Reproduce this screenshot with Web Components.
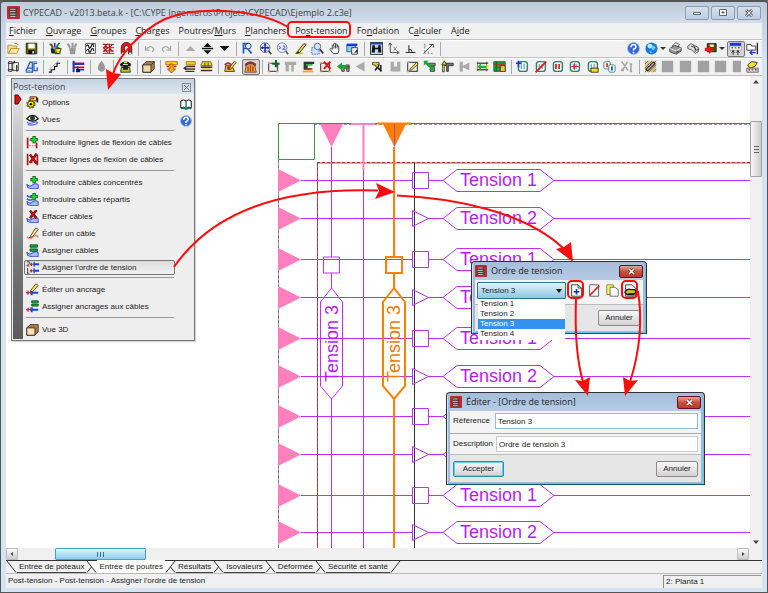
<!DOCTYPE html>
<html lang="fr">
<head>
<meta charset="utf-8">
<title>CYPECAD - v2013.beta.k</title>
<style>
html,body{margin:0;height:100%}
body{font:8px/12px "Liberation Sans",Arial,sans-serif;color:#222;background:#666;--ui:"Open Sans","Noto Sans",sans-serif}
</style>
</head>
<body>
<cad-app></cad-app>
<script>
const ICONS={
logo:'<rect width="16" height="16" rx="1" fill="#c22a2f"/><path d="M4 3h9l-2 2H3zM3 6h9l-1 2H2.500zM4 9h9l-2 2H3zM3 12h10l-2 2H4z" fill="#eee" stroke="#222" stroke-width=".8"/><path d="M11 2v12" stroke="#333"/>',
open:'<path d="M1 4h5l1 1h5v3H5l-3 6H1z" fill="#f7dc8b" stroke="#b98a2d"/><path d="M5 8h10l-3 6H2z" fill="#ffe9a8" stroke="#b98a2d"/><path d="M9 2q3-2 5 2" fill="none" stroke="#666"/>',
save:'<path d="M1.500 1.500h13v13h-13z" fill="#6b6b00" stroke="#111"/><path d="M4 2h8v6H4z" fill="#fff"/><path d="M4 10h8v5H4z" fill="#111"/><path d="M9 11h2v3H9z" fill="#ddd"/>',
pots:'<path d="M1 2l3 4v3l4 5h5V8L9 6l4-5" fill="none" stroke="#008a2a" stroke-width="2"/><path d="M2 8h5v6H3z" fill="#222"/><path d="M8 8h7l-2 6H9z" fill="#ffd81e" stroke="#222"/><path d="M7 1v6" stroke="#1638d8" stroke-width="2"/><path d="M3 2l2 5" stroke="#e11" stroke-width="1.500"/>',
potsg:'<path d="M2 2l3 5M8 1v6M13 2l-3 5" stroke="#999" stroke-width="2.500"/><path d="M4 7h8l-1 8H5z" fill="#999"/>',
graph:'<path d="M2 2h12v12H2z" fill="#fff" stroke="#333"/><path d="M3 5q2-3 3 1t3-1 3 1M3 11q2-4 3 0t3-1 3 1" fill="none" stroke="#111" stroke-width="1.500"/>',
mesh:'<path d="M1 3h14M1 7h14M1 11h14M1 14h14" stroke="#333"/><path d="M2 2l5 5-5 5M7 2l-5 5 5 6M9 2v12M13 3l-4 4 4 5" fill="none" stroke="#c11" stroke-width="1.500"/>',
magnet:'<path d="M3.500 15V7a4.500 4.500 0 0 1 9 0v8" fill="none" stroke="#222" stroke-width="5"/><path d="M3.500 12V7a4.500 4.500 0 0 1 9 0v5" fill="none" stroke="#e01818" stroke-width="3.500"/><path d="M2 13h3v2H2zM11 13h3v2h-3z" fill="#fff"/>',
undo:'<path d="M3 5v5h5M4 9q5-6 9-1 1 2-2 4" fill="none" stroke="#aaa" stroke-width="1.500"/>',
redo:'<path d="M13 5v5H8M12 9Q7 3 3 8q-1 2 2 4" fill="none" stroke="#aaa" stroke-width="1.500"/>',
up:'<path d="M2 11l6-6 6 6z" fill="#aaa"/>',
updown:'<path d="M3 6l5-5 5 5zM3 10l5 5 5-5zM1 7.200h14v1.600H1z" fill="#111"/>',
down:'<path d="M2 5h12l-6 6z" fill="#111"/>',
zr:'<path d="M3 14V2h6q4 3 0 6H4M8 8l5 6" fill="none" stroke="#1f4fd0" stroke-width="2"/><path d="M2 2l9 9" stroke="#38b"/><circle cx="9" cy="5" r="3.500" fill="#d4f0ff" stroke="#123"/>',
zall:'<circle cx="7.500" cy="7" r="6" fill="#eef" stroke="#555"/><path d="M12 11l3 4" stroke="#333" stroke-width="2"/><path d="M7.500 2v10M2.500 7h10" stroke="#1638d8" stroke-width="2"/><path d="M5.500 4h4l-2-3zM5.500 10h4l-2 3zM5 5v4L2 7zM10 5v4l3-2z" fill="#1638d8"/>',
z2:'<circle cx="7.500" cy="7" r="6" fill="#eef" stroke="#777"/><path d="M12 11l3 4" stroke="#555" stroke-width="2"/><path d="M3 5l3 2-3 2M8 5h3v2L8 9h4" fill="none" stroke="#2458e0"/>',
pencil:'<path d="M1 14h10" stroke="#cb1" stroke-width="2"/><path d="M4 12L12 2l3 1-8 10-4 1z" fill="#e6d83a" stroke="#222"/><path d="M3 14l2-3 2 2z" fill="#222"/>',
zwin:'<path d="M1 7h9v8H1z" fill="#cfe6ff" stroke="#35c" stroke-dasharray="2 1"/><circle cx="8" cy="5.500" r="4" fill="#cfe8f8" stroke="#456"/><path d="M11 9l4 5" stroke="#333" stroke-width="2"/>',
hand:'<path d="M5 14L1 9q1-2 3 0V4q1-1 2 0V2q1-1 2 0v1q1-1 2 0v2q2-1 2 1v5l-1 3z" fill="#fff" stroke="#222"/><path d="M6 4v4M8 3v5M10 4v4" stroke="#222"/>',
print3:'<path d="M1 3h11v9H1z" fill="#7fd4e8" stroke="#124c9c"/><path d="M1 2h13v3H1z" fill="#1638d8"/><path d="M7 7h7v8H7z" fill="#fff" stroke="#222"/><path d="M10 13l4-4v4z" fill="#222"/>',
bino:'<path d="M.5.500h15v15H.5z" fill="#bdd3ee" stroke="#111"/><path d="M3 4h3v3h4V4h3l1 9h-4V9H6v4H2z" fill="#111"/><path d="M1 2h14" stroke="#1638d8" stroke-width="2"/>',
axes:'<path d="M4 2v11h10M2 4l2-3 2 3M12 11l3 2-3 2" fill="none" stroke="#333"/><path d="M8 6l4 5M12 6l-4 5" stroke="#777"/>',
perp:'<path d="M2 13h12M6 13V4M6 9q4 0 4 4" fill="none" stroke="#333" stroke-width="1.300"/>',
diag:'<path d="M2 14L13 3M9 3h5v4" fill="none" stroke="#222"/><path d="M3 2v12h11M3 5h3M8 14v-4" fill="none" stroke="#777" stroke-dasharray="2 2"/>',
help:'<circle cx="8" cy="8" r="7.300" fill="#3469d8" stroke="#8fb3ec"/><path d="M5 6.500q0-3.500 3-3.500t3 3q0 1.500-3 3v1.500M8 12v2" fill="none" stroke="#fff" stroke-width="1.900"/>',
globe:'<circle cx="8" cy="8" r="7.500" fill="#1979dc"/><circle cx="6" cy="5" r="3" fill="#bfe6ff"/><path d="M9 4l4 2-2 4-3-1zM5 11l4 1-2 2z" fill="#6fd0ef"/>',
printer:'<path d="M4 5l4-4 5 2-3 4z" fill="#fff" stroke="#444"/><path d="M1 8l6-4 8 3v4l-6 4-8-3z" fill="#999" stroke="#333"/><path d="M1 8l8 3 6-4" fill="none" stroke="#eee"/><path d="M9 11v3l4-3z" fill="#555"/>',
plot:'<path d="M1 5l4-3 4 2 5 3v5l-4 2-4-4-5-2z" fill="#ddd" stroke="#444"/><path d="M5 5l5 2v5M8 4l3 6 4-1" fill="none" stroke="#333"/>',
export:'<path d="M4 2h11v10H4z" fill="#555500" stroke="#111"/><path d="M7 3h5v3H7z" fill="#eee"/><path d="M1 7h5V4l6 5-6 6v-4H1z" fill="#e31b1b"/>',
panel:'<path d="M1 1h14v4H1z" fill="#1638d8"/><path d="M1 5h14v5H1z" fill="#fff" stroke="#999"/><path d="M3 7h2" stroke="#e22" stroke-width="2"/><path d="M7 7h2" stroke="#2a2" stroke-width="2"/><path d="M11 7h2" stroke="#e22" stroke-width="2"/><path d="M5 10v6M3 13l2-2 2 2M11 10v6M9 13l2-2 2 2" stroke="#111" fill="none"/>',
leave:'<path d="M1 3h5l1 2h5v5H1z" fill="#fff" stroke="#222"/><path d="M14 1v14" stroke="#222" stroke-width="1.500"/><path d="M12 13H5M8 10l-3 3 3 3" fill="none" stroke="#1638d8" stroke-width="1.500"/>',
column:'<path d="M2 2h4v12H2zM7 3h7v10H7z" fill="#eee" stroke="#333"/><path d="M1 4h7M1 12h7M9 1v3M12 6v8" stroke="#222" stroke-width="1.500"/>',
ag:'<path d="M1 14L6 3h3v11M3 10h6M15 4h-4v9h4V9M1 15h9" fill="none" stroke="#2a5fc8" stroke-width="1.600"/><path d="M5 2h10M3 13h4" stroke="#5ac3dc" stroke-width="1.500"/>',
stairs:'<path d="M1 15h3v-3h4V8h3V4h4" fill="none" stroke="#111" stroke-width="1.400"/><path d="M1 12l12-11" stroke="#999"/>',
beamred:'<path d="M1 3h14v3H1zM1 8h14v2H1z" fill="#c11"/><path d="M2 1v14" stroke="#1638d8" stroke-width="2.500"/><path d="M7 8v4h8" fill="none" stroke="#1638d8" stroke-width="2"/><path d="M5 11h5v4H5z" fill="#123"/><path d="M4 5h11" stroke="#1638d8" stroke-width="2"/>',
drop:'<path d="M8 1q6 7 4 11-4 5-8 0-2-4 4-11z" fill="#999"/>',
phone:'<path d="M1 5q7-7 14 0l-1 3h-3V5H5v3H2z" fill="#222"/><path d="M3 9h10l1 6H2z" fill="#b7c91c" stroke="#222"/><path d="M5 6h6v6H5z" fill="#222"/><path d="M6 3h4" stroke="#ee2" stroke-width="2"/>',
cube:'<path d="M1 6l4-4h10v9l-4 4H1z" fill="#b77d3c" stroke="#222"/><path d="M1 6h10v9H1z" fill="#f2d9ad" stroke="#222"/><path d="M11 6l4-4" stroke="#222"/>',
beamy1:'<path d="M1 2h14v4H1z" fill="#ffd31a" stroke="#a60"/><path d="M6 5h4v6h3l-5 5-5-5h3z" fill="#f5b400" stroke="#a30"/><path d="M2 8h3M11 8h3" stroke="#b20" stroke-width="2"/>',
beamy2:'<path d="M4 2h11v4H4z" fill="#ffc91a" stroke="#a60"/><path d="M4 8h11M3 11h12M3 14h11" stroke="#333" stroke-width="1.700"/><path d="M5 9.500h9" stroke="#fc2"/><path d="M0 10l4-3v6z" fill="#333"/>',
beamy3:'<path d="M3 2h10l2 5H1z" fill="#ffd31a" stroke="#653"/><path d="M1 9h14M1 13h14" stroke="#333" stroke-width="1.700"/><path d="M2 11h12" stroke="#fc2" stroke-width="2"/><path d="M6 3v5M10 3v5" stroke="#333"/>',
phonep:'<path d="M2 7h8l3 7H1z" fill="#f7c71c" stroke="#222"/><path d="M7 11l7-9" stroke="#432" stroke-width="3.500"/><path d="M7 11l7-9" stroke="#fd4" stroke-width="2"/><path d="M1 6q4-4 8 0" stroke="#a33" stroke-width="2.500" fill="none"/><path d="M4 8h4v4H4z" fill="#a22"/>',
phoner:'<path d="M1 5q7-7 14 0l-1 3h-3V5H5v3H2z" fill="#833"/><path d="M3 6h10l2 9H1z" fill="#f7b81c" stroke="#733"/><path d="M5 8v6M8 7v7M11 8v6" stroke="#a22" stroke-width="1.500"/>',
addp:'<path d="M2 4h11v10H2z" fill="#eee" stroke="#555" stroke-width="1.500"/><path d="M1 4h3M1 14h3M11 14h3" stroke="#d96" stroke-width="2"/><path d="M11 0v9M6.500 4.500h9" stroke="#0b6b22" stroke-width="2.500"/>',
gn:'<path d="M1 2h14v4h-3v8H9V6H6v8H2V6H1z" fill="#aaa"/>',
bm1:'<path d="M2 2h13v3H7v5h5v2H2z" fill="#333"/><path d="M1 14h13" stroke="#f7aa1c" stroke-width="2.500"/><path d="M5 6h8" stroke="#2b4" stroke-width="2"/><path d="M4 11h9" stroke="#c22"/>',
delp:'<path d="M2 4h11v10H2z" fill="#eee" stroke="#555" stroke-width="1.500"/><path d="M1 4h2M1 14h3M11 14h3" stroke="#d83" stroke-width="2"/><path d="M6 2l8 9M14 2l-8 9" stroke="#e11" stroke-width="2.500"/>',
larr:'<path d="M5 8h10v2H9v4H6zM11 6h4v8h-3z" fill="#888" stroke="#444"/><path d="M0 8l6-5v3h6v4H6v3z" fill="#19a52f"/>',
gl:'<path d="M2 8l11-6v12z" fill="#aaa"/>',
bm2:'<path d="M2 3h8v3H2z" fill="#f0cc24" stroke="#333"/><path d="M5 6l8 8M5 13l5-7M12 6v8" stroke="#222" stroke-width="2"/><path d="M4 3l4 5" stroke="#dd0" stroke-width="2"/>',
gu:'<path d="M2 2h4v6h4V2h4v12H2z" fill="#aaa"/>',
editp:'<path d="M2 3h12v11H2z" fill="#eee" stroke="#555" stroke-width="1.500"/><path d="M5 11l8-8 2 2-8 7-3 1z" fill="#f4dc32" stroke="#444"/><path d="M1 3h3M1 14h3" stroke="#d96" stroke-width="2"/>',
gb:'<path d="M6 4h9v3H6zM9 8h5v6H9z" fill="#888" stroke="#333"/><path d="M2 2l9 8" stroke="#1a3" stroke-width="3"/><path d="M1 1h6L1 7zM13 12H7l6-6z" fill="#1a3"/>',
bm3:'<path d="M3 15V6" stroke="#333" stroke-width="3"/><path d="M3 14V6" stroke="#ff0"/><path d="M5 4h10v3H9v7H7V7H5z" fill="#777" stroke="#222"/><path d="M1 6l3-5 3 5z" fill="#dd0" stroke="#222"/>',
gh:'<path d="M2 2h4v5l8-4v10l-8-4v5H2z" fill="#aaa"/>',
bm4:'<path d="M2 2v12M13 2v12" stroke="#c44"/><path d="M1 4h14M1 12h14" stroke="#555" stroke-width="2"/><path d="M2 8l4-4v3h8v3H6v3z" fill="#19b52f"/><path d="M13 6h3v4h-3z" fill="#ee3"/>',
bm5:'<path d="M1 2h14v12H1z" fill="#19a52f" stroke="#064"/><path d="M4 2v12M9 7h6v7H9z" stroke="#333" fill="#ffc82e"/><path d="M1 5h14M6 9h4" stroke="#c22" stroke-width="1.500"/>',
doc:'<rect x="3" y="2" width="11" height="12" rx="3" fill="#eaf9f2" stroke="#357c74" stroke-width="1.700"/><path d="M6.500 5v6M10 5v6" stroke="#4a70c0"/>',
gray:'<path d="M1 1h14v14H1z" fill="#a2a2a2"/>',
cut:'<path d="M2 2l8 11M9 2L3 13M12 5h3M13.500 5v9M12 14h3" fill="none" stroke="#a7a7a7" stroke-width="2"/><circle cx="3" cy="12" r="2" fill="#aaa"/>',
hatch:'<path d="M1 1h14v14H1z" fill="#e2c68c"/><path d="M1 5l4-4M1 10l9-9M1 15L15 1M6 15l9-9M11 15l4-4" stroke="#654"/><path d="M3 13L13 3" stroke="#333" stroke-width="4.500"/><path d="M4 12l8-8" stroke="#aab" stroke-width="1.500"/>',
tags:'<path d="M2 6l5-4 7 1-3 5-6 2z" fill="#f3e32a" stroke="#222"/><path d="M1 10h14v5H1z" fill="#ddd" stroke="#555"/><path d="M3 12h2" stroke="#d22" stroke-width="2"/><path d="M7 12h2" stroke="#2a3" stroke-width="2"/><path d="M11 12h2" stroke="#c22" stroke-width="2"/>',
opts:'<circle cx="6" cy="10" r="4" fill="#ffe60a" stroke="#222"/><circle cx="6" cy="10" r="5" fill="none" stroke="#554d00" stroke-width="1.500" stroke-dasharray="2 2"/><circle cx="6" cy="10" r="1.500"/><path d="M5 1h8v5H5z" fill="#ffd91a" stroke="#222"/><path d="M13 2h2v6h-2z" fill="#222"/><path d="M6 2h4v2H6z" fill="#e22"/>',
eye:'<path d="M1 7q7-8 14 0-7 6-14 0z" fill="#fff" stroke="#111" stroke-width="1.500"/><circle cx="8" cy="6.500" r="3" fill="#263c1f"/><path d="M1 11q3 3 7 1t7 0M2 14q6 2 12-1" fill="none" stroke="#5868f0" stroke-width="1.500"/>',
flexadd:'<path d="M2 2v13M13 8v7" stroke="#a11" stroke-width="2"/><path d="M4 5h3M4 12h8" stroke="#d55" stroke-dasharray="2 1"/><path d="M10 0v9M5.500 4.500h9" stroke="#065a12" stroke-width="4"/><path d="M10 1v7M6.500 4.500h7" stroke="#17d82c" stroke-width="2.500"/>',
flexdel:'<path d="M2 1v14M14 2v13" stroke="#a11" stroke-width="2"/><path d="M4 12h9" stroke="#d55" stroke-dasharray="2 1"/><path d="M5 2l8 11M13 1L5 12" stroke="#300" stroke-width="3"/><path d="M5 2l8 11M13 1L5 12" stroke="#d11" stroke-width="1.700"/>',
wave:'<path d="M1 10q3 4 7 1t7 0v4q-6 2-13-1z" fill="#aab8ff" stroke="#4358e8" stroke-width="1.300"/>',
vue:'<path d="M1 6l4-4h10v9l-4 4H1z" fill="#b77d3c" stroke="#222"/><path d="M1 6h10v9H1z" fill="#f9e0b5" stroke="#222"/>',
book:'<path d="M1 4q4-3 7 0 4-3 7 0v9q-3-2-7 1-3-3-7-1z" fill="#fff" stroke="#111" stroke-width="1.300"/><path d="M8 4v10M1 14q5-1 7 1 3-2 7-1" fill="none" stroke="#087b6b" stroke-width="1.800"/>',
order:'<path d="M1 1h3v2L1 6h3M1 10l1-1v6M1 15h3" fill="none" stroke="#222"/><path d="M4.500 4h4M6.500 2v4M4.500 12h4M6.500 10v4" stroke="#c11" stroke-width="1.500"/><path d="M9 4h7M9 12h7" stroke="#1745e0" stroke-width="2.500"/><path d="M10 1v6M10 9v6" stroke="#1745e0" stroke-width="1.500"/>',
newdoc:'<path d="M2 1h8l4 4v10H2z" fill="#fff" stroke="#222"/><path d="M10 1v4h4" fill="none" stroke="#222"/><path d="M8 6v7M4.500 9.500h7" stroke="#172fbd" stroke-width="2"/>',
nodoc:'<path d="M2 1h11v14H2z" fill="#fff" stroke="#444"/><path d="M2 14L14 2" stroke="#d22" stroke-width="2"/><path d="M2 1l5 8" stroke="#ddd"/>',
copydoc:'<path d="M1 1h8v12H1z" fill="#fff35c" stroke="#7a7a35"/><path d="M5 4h6l4 3v8H5z" fill="#fff" stroke="#555"/>',
editdoc:'<path d="M2 1h8l4 4v10H2z" fill="#fff" stroke="#222"/><path d="M1 10q3-5 8-3h4q3 2 0 5H7q-4 2-6-2z" fill="#d3c416" stroke="#111" stroke-width="1.500"/><path d="M4 13h9" stroke="#111" stroke-width="2"/>',
};
ICONS.cabadd=ICONS.wave+'<path d="M10 0v9M5.500 4.500h9" stroke="#065a12" stroke-width="4"/><path d="M10 1v7M6.500 4.500h7" stroke="#17d82c" stroke-width="2.500"/>';
ICONS.cabrep='<path d="M1 3q3 3 7 1M1 7q3 3 7 1" fill="none" stroke="#4358e8" stroke-width="2"/>'+ICONS.cabadd;
ICONS.cabdel=ICONS.wave+'<path d="M5 1l8 9M13 0L5 10" stroke="#400" stroke-width="3"/><path d="M5 1l8 9M13 0L5 10" stroke="#d11" stroke-width="1.600"/>';
ICONS.cabedit='<path d="M1 12q4 4 8 0t6 1" fill="none" stroke="#e88" stroke-width="2"/><path d="M5 12L12 1l3 2-7 9-4 1z" fill="#ffe987" stroke="#432"/>';
ICONS.cabset=ICONS.wave+'<path d="M5 1h9v3H5zM5 6h9v3H5z" fill="#16a63a" stroke="#064d18"/>';
ICONS.ancedit='<path d="M5 12h10M7 9v6" stroke="#1745e0" stroke-width="2.500"/><path d="M0 12h5M2.500 9.500v5" stroke="#c11" stroke-width="1.500"/><path d="M6 9l6-8 3 2-6 7-4 1z" fill="#ffe65a" stroke="#432"/>';
ICONS.ancset='<path d="M5 12h10M7 9v6" stroke="#1745e0" stroke-width="2.500"/><path d="M0 12h5M2.500 9.500v5" stroke="#c11" stroke-width="1.500"/><path d="M7 1h8v2.500H7zM7 5h8v2.500H7z" fill="#16a63a" stroke="#064d18"/>';
ICONS.docadd=ICONS.doc+'<path d="M3 1v8M0 4h7" stroke="#1638d8" stroke-width="2"/>';
ICONS.docdel=ICONS.doc+'<path d="M2 15L15 2" stroke="#d22" stroke-width="2.500"/>';
ICONS.docnum=ICONS.doc+'<path d="M6 5v6M10 5v6" stroke="#d22" stroke-width="2"/>';
ICONS.doccross=ICONS.doc+'<path d="M8 4v8M4 8h9" stroke="#d22" stroke-width="1.500"/>';
ICONS.doclock=ICONS.doc+'<path d="M6 10h9v5H6z" fill="#f6dc24" stroke="#221"/>';
ICONS.docshift='<rect x="1" y="2" width="8" height="9" rx="2" fill="#eaf9f2" stroke="#357c74"/><rect x="7" y="6" width="8" height="9" rx="2" fill="#eaf9f2" stroke="#357c74"/><path d="M5 4v5" stroke="#d22" stroke-width="2"/><path d="M11 8v5" stroke="#1638d8" stroke-width="2"/>';

const make=(tag,build)=>customElements.define(tag,class extends HTMLElement{
  constructor(){super();this.attachShadow({mode:'open'});}
  connectedCallback(){const t=document.createElement('template');t.innerHTML=build(this);this.shadowRoot.replaceChildren(t.content.cloneNode(true));}
});

make('cad-icon',el=>`<style>:host{display:block;width:14px;height:14px;flex:none}svg{display:block;width:100%;height:100%}</style><svg viewBox="0 0 16 16" aria-hidden="true">${ICONS[el.getAttribute('name')]||''}</svg>`);

make('tool-button',el=>`<style>:host{display:block;flex:none}button{display:flex;align-items:center;padding:0;border:0;background:none;height:16px}
cad-icon{width:13px;height:13px;margin-right:1px}
:host([pressed]) button{margin:0 -2px;padding:0 1px;border:1px solid #777;border-radius:2px;background:#d4d4d4}
:host([menu]) button::after{content:"";border:3px solid transparent;border-top-color:#333;border-bottom:0;margin-left:1px}
:host([narrow]){width:9px;overflow:hidden}</style><button type="button" aria-label="${el.getAttribute('icon')}"><cad-icon name="${el.getAttribute('icon')}"></cad-icon></button>`);

make('tool-group',el=>`<style>:host{display:flex;justify-content:space-between;align-items:center;flex:none;width:${el.getAttribute('span')||14}px}</style>`+
 el.getAttribute('icons').split(' ').map(n=>{const[a,f]=n.split(':');return `<tool-button icon="${a}" ${f||''}></tool-button>`}).join(''));

make('tool-bar',()=>`<style>:host{display:flex;align-items:center;justify-content:space-between;height:17px;padding:0 2px 0 1px;border-top:1px solid #c3c3c3;background:#f1f1f1;box-shadow:inset 0 1px #fff}</style><slot></slot>`);

make('tool-cluster',el=>`<style>:host{display:flex;justify-content:space-between;align-items:center;flex:0 0 ${el.getAttribute('span')}px}
::slotted(i){width:1px;height:14px;background:#aaa;flex:none}</style><slot></slot>`);

make('title-bar',()=>`<style>:host{display:flex;align-items:center;height:21px;padding:0 0 0 1px;background:linear-gradient(#bccbdc,#d3deeb);font:9px/14px var(--ui);color:#444}
cad-icon{width:13px;height:13px;margin-right:3px}span{flex:1;white-space:nowrap;overflow:hidden}
nav{display:flex;gap:2px;margin-right:1px}
button{width:24px;height:14px;padding:0;display:grid;place-items:center;border:1px solid #8c9db2;border-radius:2px;background:linear-gradient(#d5e0ec,#bfcddd)}
svg{width:10px;height:8px;display:block}</style><cad-icon name="logo"></cad-icon><span><slot></slot></span>
<nav><button aria-label="Réduire"><svg viewBox="0 0 10 8"><path d="M1.500 3.500h7v2h-7z" fill="#fff" stroke="#667"/></svg></button>
<button aria-label="Agrandir"><svg viewBox="0 0 10 8"><path d="M1.500.500h7v6h-7z" fill="#fff" stroke="#667"/><path d="M4 3h2v1H4z" stroke="#667"/></svg></button>
<button aria-label="Fermer"><svg viewBox="0 0 10 8"><path d="M2 1l6 6M8 1L2 7" stroke="#667" stroke-width="3"/><path d="M2 1l6 6M8 1L2 7" stroke="#fff"/></svg></button></nav>`);

make('menu-bar',()=>`<style>:host{display:flex;height:16px;align-items:center;gap:9px;padding:0 3px;background:#f1f1f1;font:9px/14px var(--ui)}
a{color:#222;text-decoration:none;white-space:nowrap}</style>`+
['<u>F</u>ichier','<u>O</u>uvrage','<u>G</u>roupes','<u>C</u>harges','Poutres/<u>M</u>urs','<u>P</u>lanchers','Po<u>s</u>t-tension','Fo<u>n</u>dation','C<u>a</u>lculer','A<u>i</u>de'].map(t=>`<a href="#">${t}</a>`).join(''));

make('scroll-bar',el=>{const v=el.hasAttribute('vertical');return `<style>:host{display:flex;flex-direction:${v?'column':'row'};background:#f0f0f0;${v?'width:12px':'height:12px'}}
button{flex:none;padding:0;width:12px;height:12px;display:grid;place-items:center;border:${v?'0':'1px solid #bbb'};border-radius:1px;background:${v?'none':'linear-gradient(#fafafa,#ccc)'}}
svg{display:block;width:6px;height:6px}
.track{flex:1;display:flex;flex-direction:inherit}
.thumb{box-sizing:border-box;display:grid;place-items:center;border-radius:1px;${v?'height:56px;margin-top:33px;border:1px solid #a2a2a2;background:linear-gradient(90deg,#f8f8f8,#ccc)':'width:91px;margin-left:37px;border:1px solid #4ba0c6;background:linear-gradient(#dff3fc,#8fcbe9)'}}
.grip{${v?'width:5px;height:7px;background:repeating-linear-gradient(#666 0 1px,transparent 1px 3px)':'width:7px;height:5px;background:repeating-linear-gradient(90deg,#37729a 0 1px,transparent 1px 3px)'}}</style>
<button aria-label="Précédent"><svg viewBox="0 0 6 6"><path d="${v?'M0 4.500h6L3 1z':'M4 1v4L1.500 3z'}" fill="#444"/></svg></button><div class="track"><div class="thumb"><div class="grip"></div></div></div>
<button aria-label="Suivant"><svg viewBox="0 0 6 6"><path d="${v?'M0 1.500h6L3 5z':'M2 1v4l2.500-2z'}" fill="#444"/></svg></button>`});

make('plan-view',()=>{
 const rows=[180,218,259,297,338,376,416,454,495,532];
 let s='';
 rows.forEach((y,i)=>{const sq=i%2===0;
  s+=`<path d="M278 ${y-11}v23L301 ${y+.5}z" fill="#ff7fbf"/>
  <path d="M301 ${y+.5}H412M428 ${y+.5}H443L457 ${y-10.500}H540L554 ${y+.5}L540 ${y+11.500}H457L443 ${y+.5}" fill="none" stroke="#c22cff"/>
  <line x1="554" x2="120%" y1="${y+.5}" y2="${y+.5}" stroke="#c22cff"/>
  <path d="${sq?`M412.500 ${y-7.500}h16v16h-16z`:`M412.500 ${y-7.500}v16l16-8z`}" fill="none" stroke="#c22cff"/>
  ${i===6||i===7?'':`<text x="460" y="${y+6}">Tension ${sq?1:2}</text>`}`;});
 const v=(x,c,w)=>`<path d="M${x} 147V257M${x} 273V288l-11 14v84l11 13 11-13v-84l-11-14M${x} 399V1000M${x-8} 257h16v16h-16z" fill="none" stroke="${c}" stroke-width="${w}"/><text transform="translate(${x+6} 382) rotate(-90)" fill="${c}">Tension 3</text>`;
 return `<style>:host{display:block;overflow:hidden;background:#fff}svg{display:block;width:100%;height:100%}text{font:18px "Liberation Sans",Arial,sans-serif;fill:#b81cf5}.or text{fill:#f27a00}</style>
 <svg><g transform="translate(-6 -76)">
 <line x1="314" x2="120%" y1="123.500" y2="123.500" stroke="#e03a3a"/><line x1="314" x2="120%" y1="124.500" y2="124.500" stroke="#999" stroke-dasharray="3 2"/>
 <path d="M278.500 160V1000" stroke="#e88"/><path d="M278.500 160V1000" stroke="#777" stroke-dasharray="3 2"/>
 <line x1="317" x2="120%" y1="163" y2="163" stroke="#f79a9a" stroke-width="2"/><line x1="317" x2="120%" y1="162.500" y2="162.500" stroke="#844" stroke-dasharray="3 2"/>
 <path d="M317.500 163V1000" stroke="#f03c3c"/><path d="M317.500 163V1000" stroke="#a33" stroke-dasharray="3 2"/>
 <path d="M278.500 123.500h36v36h-36z" fill="#fff" stroke="#3c9446"/>
 <path d="M414.500 163V1000" stroke="#333"/><path d="M363.500 168V1000" stroke="#c22cff"/>${s}
 <path d="M320 124h23l-11.500 23z" fill="#ff7fbf"/><path d="M351 124h24M363.500 124v46" stroke="#ff7fbf" stroke-width="2"/>
 <path d="M377 123.500h34" stroke="#ff8000" stroke-width="2"/><path d="M383 124h23l-11.500 23z" fill="#ff8000"/><path d="M394.500 124v22" stroke="#a24bbd"/>
 ${v(331.500,'#c22cff',1)}<g class="or">${v(394,'#ff8000',2)}</g>
 </g></svg>`});

make('palette-item',el=>`<style>:host{display:block}button{display:flex;align-items:center;width:151px;height:17px;padding:0 0 0 2px;border:0;background:none;font:inherit;color:inherit;white-space:nowrap;gap:3px}
cad-icon{width:13px;height:13px}:host([pressed]) button{height:15px;margin:1px 0;padding-left:1px;border:1px solid #777;border-radius:2px;background:linear-gradient(#ddd,#f1f1f1)}</style>
<button type="button"><cad-icon name="${el.getAttribute('icon')}"></cad-icon><slot></slot></button>`);

make('tool-palette',()=>`<style>:host{display:block;border:1px solid #777;background:#eee;box-shadow:1px 1px 1px #9996}
header{display:flex;align-items:center;justify-content:space-between;height:14px;padding:1px 3px 0 1px;background:linear-gradient(#c4d2e0,#dde7f1);font:9px/14px var(--ui);color:#444}
header button{padding:0;width:9px;height:9px;border:1px solid #889;background:none;display:grid}header svg{width:7px;height:7px}
.body{display:flex;padding:0 2px 1px 1px}
.strip{width:10px;background:linear-gradient(#e4e4e4,#777 65%,#5c5c5c)}.strip svg{display:block;width:8px;height:11px;margin-left:1px}
.list{flex:1;padding:0 0 1px 1px}
hr{height:1px;border:0;background:#999;margin:2px 0 3px 2px;width:148px}
.side{display:flex;flex-direction:column;gap:5px;padding-top:4px}.side button{border:0;background:none;padding:0}.side cad-icon{width:12px;height:12px}</style>
<header>Post-tension<button aria-label="Fermer"><svg viewBox="0 0 7 7"><path d="M1 1l5 5M6 1L1 6" stroke="#667"/></svg></button></header>
<div class="body"><div class="strip"><svg viewBox="0 0 8 11"><path d="M1 1h3l3 4-3 5H1z" fill="#d51414" stroke="#500"/></svg></div>
<div class="list">
<palette-item icon="opts">Options</palette-item><palette-item icon="eye">Vues</palette-item><hr>
<palette-item icon="flexadd">Introduire lignes de flexion de câbles</palette-item><palette-item icon="flexdel">Effacer lignes de flexion de câbles</palette-item><hr>
<palette-item icon="cabadd">Introduire câbles concentrés</palette-item><palette-item icon="cabrep">Introduire câbles répartis</palette-item><palette-item icon="cabdel">Effacer câbles</palette-item><palette-item icon="cabedit">Éditer un câble</palette-item><palette-item icon="cabset">Assigner câbles</palette-item><palette-item icon="order" pressed>Assigner l'ordre de tension</palette-item><hr>
<palette-item icon="ancedit">Éditer un ancrage</palette-item><palette-item icon="ancset">Assigner ancrages aux câbles</palette-item><hr>
<palette-item icon="vue">Vue 3D</palette-item></div>
<div class="side"><button aria-label="Manuel"><cad-icon name="book"></cad-icon></button><button aria-label="Aide"><cad-icon name="help"></cad-icon></button></div></div>`);

make('dialog-frame',el=>`<style>:host{display:block;box-sizing:border-box;border:1px solid #333;border-bottom-color:#115c6b;border-radius:4px 4px 0 0;background:#9dbbdc;padding:0 3px 2px;box-shadow:inset 1px 0 #cfe2f2,inset -1px -1px #5fc6dc}
header{display:flex;align-items:center;height:18px;font:9px/14px var(--ui);color:#222;background:linear-gradient(#a3bddb,#b6cce6)}
header cad-icon{width:12px;height:12px;margin-right:4px}header span{flex:1;white-space:nowrap}
header button{padding:0;width:24px;height:13px;border:1px solid #612;border-radius:2px;background:linear-gradient(#e0a79c,#c6503d 50%,#b93a26);display:grid;place-items:center}svg{width:9px;height:7px}
.top{background:#f4f4f4}.foot{display:flex;background:#e6e6e6;border-top:1px solid #bbb}</style>
<header><cad-icon name="logo"></cad-icon><span>${el.getAttribute('caption')}</span><button aria-label="Fermer"><svg viewBox="0 0 9 7"><path d="M2 1l5 5M7 1L2 6" stroke="#733" stroke-width="3"/><path d="M2 1l5 5M7 1L2 6" stroke="#fff" stroke-width="1.700"/></svg></button></header>
<div class="top"><slot></slot></div><div class="foot"><slot name="foot"></slot></div>`);

make('push-button',()=>`<style>:host{display:block}button{height:16px;width:100%;padding:0;border:1px solid #8a8a8a;border-radius:2px;background:linear-gradient(#f6f6f6,#e6e6e6 50%,#d2d2d2);font:8px/12px "Liberation Sans",Arial,sans-serif;color:#222}
:host([default]) button{border-color:#2b91b7;box-shadow:inset 0 0 0 1px #68cdea}</style><button type="button"><slot></slot></button>`);

make('order-dialog',()=>`<style>:host{display:block}.bar{display:flex;gap:5px;align-items:center;padding:2px 3px 5px 2px}
.combo{position:relative;margin-right:-1px}
select{appearance:none;display:block;width:89px;height:17px;padding:0 3px;border:1px solid #2c7690;border-radius:1px;font:inherit;color:#222;background:linear-gradient(#e3f3fb,#8fc6e2)}
.combo::after{content:"";position:absolute;right:4px;top:7px;border:3px solid transparent;border-top:4px solid #111;border-bottom:0}
ul{position:absolute;left:1px;top:17px;width:87px;margin:0;padding:0 0 1px;list-style:none;background:#fff;z-index:2}
li{line-height:10px;padding-left:2px}li[aria-selected=true]{background:#3392f0;color:#fff}
.icons{display:flex;gap:5px}.icons button{padding:0;border:0;background:none}.icons cad-icon{width:13px;height:13px}
push-button{width:42px;margin:5px 3px 5px auto}</style>
<dialog-frame caption="Ordre de tension"><div class="bar"><div class="combo"><select aria-label="Ordre de tension"><option>Tension 3</option></select>
<ul role="listbox"><li role="option">Tension 1</li><li role="option">Tension 2</li><li role="option" aria-selected="true">Tension 3</li><li role="option">Tension 4</li></ul></div>
<div class="icons"><button aria-label="Nouveau"><cad-icon name="newdoc"></cad-icon></button><button aria-label="Supprimer"><cad-icon name="nodoc"></cad-icon></button><button aria-label="Copier"><cad-icon name="copydoc"></cad-icon></button><button aria-label="Éditer"><cad-icon name="editdoc"></cad-icon></button></div></div>
<push-button slot="foot">Annuler</push-button></dialog-frame>`);

make('edit-dialog',()=>`<style>:host{display:block}label{display:flex;align-items:center;padding:2px 3px;height:16px;gap:3px}label:first-child{border-bottom:1px solid #aaa;padding-bottom:4px}
span{flex:none}label:first-child span{margin-right:2px}
input{flex:1;min-width:0;box-sizing:border-box;height:16px;padding:0 2px;border:1px solid #ccc;font:inherit;color:#222;background:#fff}label:first-child input{border-color:#8fc0e0}
.b{display:flex;flex:1;justify-content:space-between;padding:6px 3px 5px}.b push-button{width:42px}.b push-button[default]{width:51px}</style>
<dialog-frame caption="Éditer - [Ordre de tension]"><label><span>Référence</span><input value="Tension 3"></label><label><span>Description</span><input value="Ordre de tension 3"></label>
<div class="b" slot="foot"><push-button default>Accepter</push-button><push-button>Annuler</push-button></div></dialog-frame>`);

make('view-tabs',()=>{const t=['Entrée de poteaux','Entrée de poutres','Résultats','Isovaleurs','Déformée','Sécurité et santé'];
 const e=d=>`<svg viewBox="0 0 11 12" width="11" height="12">${d}</svg>`;
 const edge=i=>i===0?e('<path d="M1 0l9 11.500" stroke="#333"/>'):i===1?e('<path d="M1 0h10v12H10z" fill="#fff"/><path d="M1 0l9 11.500M5.500 6L1 11.500" fill="none" stroke="#333"/>'):i===2?e('<path d="M0 0h10L1 12H0z" fill="#fff"/><path d="M10 0L1 11.500M5.500 6l4.500 5.500" stroke="#333"/>'):i===6?e('<path d="M10 0L1 11.500" stroke="#333"/>'):e('<path d="M1 0l9 11.500M5.500 6L1 11.500" stroke="#333"/>');
 return `<style>:host{display:flex;height:12px;border-top:1px solid #333;background:#f0f0f0}svg{display:block;flex:none}
 .tabs{display:flex}button{padding:0 2px;border:0;background:none;border-bottom:1px solid #444;font:inherit;line-height:11px;color:inherit;white-space:nowrap;height:12px}.on{background:#fff;border-color:#fff;margin-top:-1px;height:13px}</style><div class="tabs" role="tablist">`+t.map((x,i)=>edge(i)+`<button role="tab" class="${i===1?'on':''}">${x}</button>`).join('')+edge(6)+'</div>'});

make('status-bar',()=>`<style>:host{display:flex;align-items:center;height:14px;background:#f0f0f0;border-top:1px solid #bbb}
span{flex:1;padding-left:2px}output{width:95px;height:12px;padding-left:2px;line-height:12px;border-left:1px solid #888;border-top:1px solid #999;margin-right:1px}</style><span>Post-tension - Post-tension - Assigner l'ordre de tension</span><output>2: Planta 1</output>`);

make('callout-layer',()=>`<style>:host{position:absolute;inset:0;pointer-events:none;z-index:5}svg{display:block;width:100%;height:100%;overflow:visible}</style>
<svg><g fill="none" stroke="#fb0d0d" stroke-width="2">
<rect x="288" y="22" width="62" height="15" rx="4"/><rect x="568" y="281" width="15" height="17" rx="4"/><rect x="622" y="281" width="15" height="17" rx="4"/>
<path d="M288 27C255 8 195 6 165 19C140 31 118 57 113 74"/><path d="M174 267C210 215 275 187 378 190.500"/><path d="M397 195.500C455 198 525 212 563 248"/>
<path d="M576 299Q574 350 583 382"/><path d="M638 291Q645 335 630 382"/></g>
<g fill="#fb0d0d"><path d="M108 90l-2-21 7 4 8 1z"/><path d="M395 192l-20 7 4-8-3-8z"/><path d="M573 262l-17-13 8-2 7-5z"/><path d="M588 396l-13-16 8 1 7-4z"/><path d="M625 396l-2-19 7 4 8-1z"/></g></svg>`);

make('cad-app',()=>`<style>:host{display:flex;flex-direction:column;position:relative;box-sizing:border-box;min-height:100vh;padding:0 5px 4px;border:1px solid #555;border-top-width:2px;border-radius:4px 4px 0 0;background:linear-gradient(#bccbdc,#d6e3f2 60px)}
.work{flex:1;display:flex;position:relative;border-top:1px solid #bbb}plan-view{flex:1;min-width:0}
tool-palette,order-dialog,edit-dialog{position:absolute}
tool-palette{left:5px;top:2px;width:182px}order-dialog{left:465px;top:185px;width:176px}edit-dialog{left:440px;top:316px;width:259px}
.h{display:flex;background:#f0f0f0}.h scroll-bar{flex:1}.h::after{content:"";width:13px}
callout-layer{margin:-2px -1px}</style>
<title-bar>CYPECAD - v2013.beta.k - [C:\\CYPE Ingenieros\\Projets\\CYPECAD\\Ejemplo 2.c3e]</title-bar>
<menu-bar></menu-bar>
<tool-bar><tool-cluster span="434"><tool-group span="32" icons="open save"></tool-group><i></i><tool-group span="85" icons="pots potsg graph mesh magnet"></tool-group><i></i><tool-group span="31" icons="undo redo"></tool-group><i></i><tool-group span="48" icons="up updown down"></tool-group><i></i><tool-group span="119" icons="zr zall z2 pencil zwin hand print3"></tool-group><i></i><tool-group span="66" icons="bino axes perp diag"></tool-group><i></i></tool-cluster>
<tool-group span="133" icons="help globe:menu printer plot export:menu panel:pressed leave"></tool-group></tool-bar>
<tool-bar><tool-cluster span="734"><tool-group span="32" icons="column ag"></tool-group><i></i><tool-group icons="stairs"></tool-group><i></i><tool-group icons="beamred"></tool-group><i></i><tool-group icons="drop"></tool-group><i></i><tool-group icons="phone"></tool-group><i></i><tool-group icons="cube"></tool-group><i></i><tool-group span="49" icons="beamy1 beamy2 beamy3"></tool-group><i></i><tool-group span="34" icons="phonep phoner:pressed"></tool-group><i></i><tool-group span="240" icons="addp gn bm1 delp larr gl bm2 gu editp gb bm3 gh bm4 bm5"></tool-group><i></i><tool-group span="118" icons="docadd docdel docnum doccross doclock docshift cut"></tool-group><i></i><tool-group span="97" icons="hatch gray gray gray gray gray:narrow"></tool-group></tool-cluster><tool-group icons="tags"></tool-group></tool-bar>
<div class="work"><plan-view></plan-view><scroll-bar vertical></scroll-bar><tool-palette></tool-palette><order-dialog></order-dialog><edit-dialog></edit-dialog></div>
<div class="h"><scroll-bar></scroll-bar></div><view-tabs></view-tabs><status-bar></status-bar><callout-layer></callout-layer>`);
</script>
</body>
</html>
